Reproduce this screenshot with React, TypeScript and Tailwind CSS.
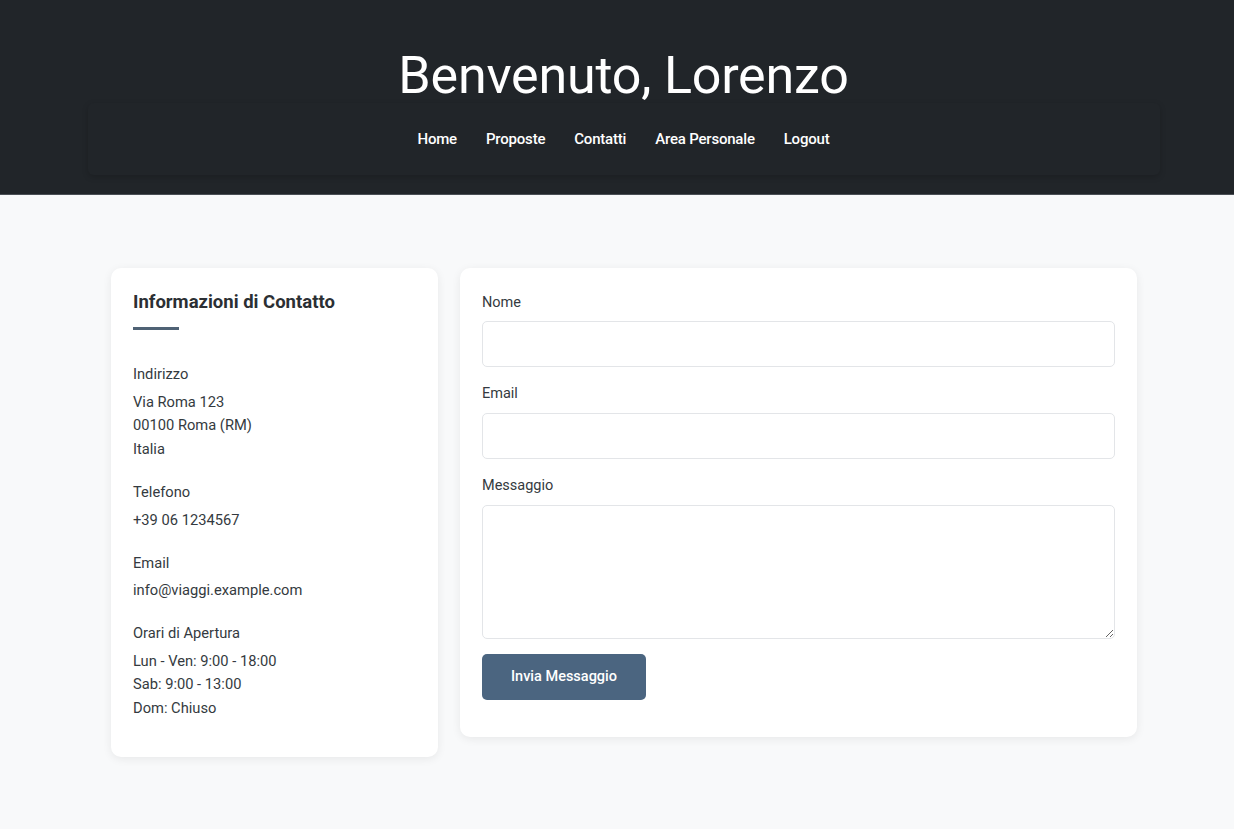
import React from "react";

export default function App() {
  const links = ["Home", "Proposte", "Contatti", "Area Personale", "Logout"];
  return (
    <div className="min-h-[829px] bg-[#f8f9fa] font-['Roboto',sans-serif] text-[#333]">
      <header className="h-[195px] bg-[#212529] border-b border-[#4a4f55] pt-[44px] pl-[13px] flex flex-col items-center">
        <h1 className="text-[52px] leading-[64px] font-normal text-white tracking-[-0.2px]">Benvenuto, Lorenzo</h1>
        <nav className="mt-[-5px] w-[1072px] h-[72px] rounded-[6px] shadow-[0_2px_6px_rgba(0,0,0,0.18)] flex items-center justify-center gap-[29px]">
          {links.map((l) => (
            <a key={l} className="text-[15px] text-white font-medium tracking-[-0.2px]">{l}</a>
          ))}
        </nav>
      </header>
      <main className="pt-[73px] pl-[111px] flex items-start gap-[22px]">
        <section className="w-[327px] bg-white rounded-[10px] shadow-[0_2px_10px_rgba(0,0,0,0.07)] px-[22px] pt-[22px] pb-[37px]">
          <h2 className="text-[18.5px] font-bold text-[#2b2f33] leading-[24px]">Informazioni di Contatto</h2>
          <div className="mt-[13px] w-[46px] h-[3px] bg-[#4f6275]" />
          <div className="mt-[33px] text-[14.7px] leading-[23.5px] text-[#343a40]">
            <p>Indirizzo</p>
            <p className="mt-[4px]">Via Roma 123<br />00100 Roma (RM)<br />Italia</p>
            <p className="mt-[20px]">Telefono</p>
            <p className="mt-[4px]">+39 06 1234567</p>
            <p className="mt-[20px]">Email</p>
            <p className="mt-[3px]">info@viaggi.example.com</p>
            <p className="mt-[20px]">Orari di Apertura</p>
            <p className="mt-[4px]">Lun - Ven: 9:00 - 18:00<br />Sab: 9:00 - 13:00<br />Dom: Chiuso</p>
          </div>
        </section>
        <section className="w-[677px] bg-white rounded-[10px] shadow-[0_2px_10px_rgba(0,0,0,0.07)] px-[22px] pt-[23px] pb-[37px]">
          <label className="block text-[14.5px] leading-[23px] text-[#343a40]">Nome</label>
          <input className="mt-[7px] block w-full h-[46px] rounded-[5px] border border-[#e3e5e8] outline-none" />
          <label className="mt-[15px] block text-[14.5px] leading-[23px] text-[#343a40]">Email</label>
          <input className="mt-[8px] block w-full h-[46px] rounded-[5px] border border-[#e3e5e8] outline-none" />
          <label className="mt-[15px] block text-[14.5px] leading-[23px] text-[#343a40]">Messaggio</label>
          <textarea className="mt-[8px] block w-full h-[134px] rounded-[5px] border border-[#e3e5e8] outline-none" />
          <button className="mt-[15px] w-[164px] h-[46px] rounded-[5px] bg-[#4b6580] text-white text-[14.5px] font-medium">Invia Messaggio</button>
        </section>
      </main>
    </div>
  );
}
